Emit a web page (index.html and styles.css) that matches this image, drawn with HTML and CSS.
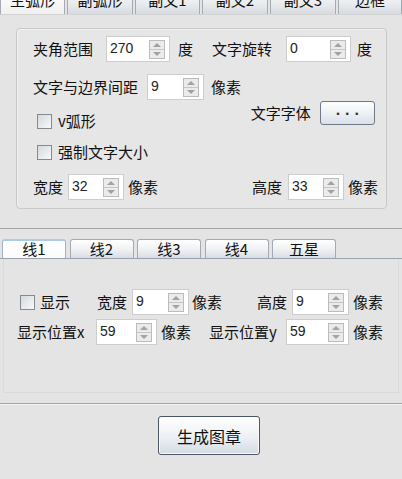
FILE: index.html
```html
<!DOCTYPE html>
<html>
<head>
<meta charset="utf-8">
<link rel="stylesheet" href="styles.css">
</head>
<body>
<div class="win">
  <div class="top-tabs">
    <div class="ttab active w65">主弧形</div>
    <div class="ttab w66">副弧形</div>
    <div class="ttab w65">副文1</div>
    <div class="ttab w66">副文2</div>
    <div class="ttab w66">副文3</div>
    <div class="ttab w64">边框</div>
  </div>

  <div class="top-panel">
    <div class="group">
      <div class="row r1">
        <span class="lbl w62">夹角范围</span>
        <div class="spinbox ml11 sw64"><span class="val">270</span><span class="spin"><i class="up"></i><i class="dn"></i></span></div>
        <span class="lbl ml8 w15">度</span>
        <span class="lbl ml19 w63">文字旋转</span>
        <div class="spinbox ml11 sw65"><span class="val">0</span><span class="spin"><i class="up"></i><i class="dn"></i></span></div>
        <span class="lbl ml6 w15">度</span>
      </div>
      <div class="row r2">
        <span class="lbl w114">文字与边界间距</span>
        <div class="spinbox sw57"><span class="val">9</span><span class="spin"><i class="up"></i><i class="dn"></i></span></div>
        <span class="lbl ml7 w30">像素</span>
      </div>
      <div class="row r3">
        <div class="chk-item low">
          <span class="chk"></span><span class="lbl small-v">v弧形</span>
        </div>
        <span class="lbl font-lbl w63">文字字体</span>
        <button class="dots">· · ·</button>
      </div>
      <div class="row r4">
        <div class="chk-item">
          <span class="chk"></span><span class="lbl">强制文字大小</span>
        </div>
      </div>
      <div class="row r5">
        <span class="lbl w30">宽度</span>
        <div class="spinbox ml5 sw56"><span class="val">32</span><span class="spin"><i class="up"></i><i class="dn"></i></span></div>
        <span class="lbl ml4 w30">像素</span>
        <span class="lbl ml94 w30">高度</span>
        <div class="spinbox ml6 sw56"><span class="val">33</span><span class="spin"><i class="up"></i><i class="dn"></i></span></div>
        <span class="lbl ml4 w30">像素</span>
      </div>
    </div>
  </div>

  <div class="line-tabs">
    <div class="ltab active">线1</div>
    <div class="ltab">线2</div>
    <div class="ltab">线3</div>
    <div class="ltab">线4</div>
    <div class="ltab">五星</div>
  </div>

  <div class="line-panel">
    <div class="row ra">
      <span class="chk ml16"></span>
      <span class="lbl ml5 w30">显示</span>
      <span class="lbl ml27 w30">宽度</span>
      <div class="spinbox ml5 sw57"><span class="val">9</span><span class="spin"><i class="up"></i><i class="dn"></i></span></div>
      <span class="lbl ml3 w30">像素</span>
      <span class="lbl ml35 w30">高度</span>
      <div class="spinbox ml5 sw57"><span class="val">9</span><span class="spin"><i class="up"></i><i class="dn"></i></span></div>
      <span class="lbl ml4 w30">像素</span>
    </div>
    <div class="row rb">
      <span class="lbl ml13 w71">显示位置x</span>
      <div class="spinbox ml8 sw61"><span class="val">59</span><span class="spin"><i class="up"></i><i class="dn"></i></span></div>
      <span class="lbl ml4 w30">像素</span>
      <span class="lbl ml18 w76">显示位置y</span>
      <div class="spinbox ml1 sw63"><span class="val">59</span><span class="spin"><i class="up"></i><i class="dn"></i></span></div>
      <span class="lbl ml4 w30">像素</span>
    </div>
  </div>

  <div class="footer">
    <button class="gen">生成图章</button>
  </div>
</div>
</body>
</html>
```

FILE: styles.css
```css
* { box-sizing: border-box; }
html, body {
  margin: 0;
  padding: 0;
  background: #e4e4e4;
}
body {
  width: 402px;
  height: 479px;
  overflow: hidden;
  font-family: "Noto Sans CJK SC", "DejaVu Sans", sans-serif;
  font-size: 15px;
  color: #111;
}
.win { width: 402px; }

/* top tabs (cut off at top) */
.top-tabs {
  height: 14px;
  overflow: hidden;
  display: flex;
  align-items: flex-end;
  gap: 2px;
}
.ttab {
  flex: none;
  height: 27px;
  line-height: 24px;
  text-align: center;
  border: 1px solid #a3abb5;
  border-bottom: none;
  border-radius: 3px 3px 0 0;
  background: linear-gradient(#fbfbfb, #e9ecef 60%, #d6dbe1);
  font-size: 15px;
}
.ttab.active {
  background: linear-gradient(#ffffff, #f1f1f1);
  border-color: #a8acb0;
}
.w65 { width: 65px; }
.w66 { width: 66px; }
.w64 { width: 64px; }

.top-panel {
  height: 215px;
  border-top: 1px solid #d2d2d2;
  border-bottom: 1px solid #a4a4a4;
  padding-top: 13px;
  padding-left: 16px;
}
.group {
  width: 371px;
  height: 181px;
  border: 1px solid #c8c8c8;
  border-radius: 4px;
  box-shadow: inset 1px 1px 0 #f2f2f2;
  background: #e6e6e6;
  padding: 7px 0 8px 16px;
}

.row {
  display: flex;
  align-items: center;
}
.r1 { height: 26px; }
.r2 { height: 26px; margin-top: 12px; }
.r3 { height: 28px; margin-top: 1px; align-items: flex-start; }
.r4 { height: 20px; margin-top: 13px; }
.r5 { height: 26px; margin-top: 12px; }

.lbl {
  flex: none;
  white-space: nowrap;
  line-height: 20px;
}
.w15 { width: 15px; }
.w30 { width: 30px; }
.w62 { width: 62px; }
.w63 { width: 63px; }
.w71 { width: 71px; }
.w76 { width: 76px; }
.w114 { width: 114px; }

.ml1 { margin-left: 1px; }
.ml3 { margin-left: 3px; }
.ml4 { margin-left: 4px; }
.ml5 { margin-left: 5px; }
.ml6 { margin-left: 6px; }
.ml7 { margin-left: 7px; }
.ml8 { margin-left: 8px; }
.ml11 { margin-left: 11px; }
.ml13 { margin-left: 13px; }
.ml16 { margin-left: 16px; }
.ml18 { margin-left: 18px; }
.ml19 { margin-left: 19px; }
.ml27 { margin-left: 27px; }
.ml35 { margin-left: 35px; }
.ml94 { margin-left: 94px; }

/* spinner */
.spinbox {
  flex: none;
  height: 26px;
  display: flex;
  align-items: center;
  background: #fff;
  border: 1px solid #cdcdcd;
  padding: 0 4px 0 3px;
}
.sw56 { width: 56px; }
.sw57 { width: 57px; }
.sw61 { width: 61px; }
.sw63 { width: 63px; }
.sw64 { width: 64px; }
.sw65 { width: 65px; }
.val {
  flex: 1;
  font-family: "Liberation Sans", Arial, sans-serif;
  font-size: 14px;
  color: #222;
  line-height: 16px;
  padding-bottom: 3px;
}
.spin {
  flex: none;
  width: 16px;
  height: 19px;
  border: 1px solid #bcbcbc;
  background: #ebebeb;
  display: flex;
  flex-direction: column;
}
.spin i {
  flex: 1;
  display: flex;
  align-items: center;
  justify-content: center;
}
.spin i + i { border-top: 1px solid #c6c6c6; }
.spin i.up::before {
  content: "";
  border-left: 4px solid transparent;
  border-right: 4px solid transparent;
  border-bottom: 4px solid #a2a2a2;
}
.spin i.dn::before {
  content: "";
  border-left: 4px solid transparent;
  border-right: 4px solid transparent;
  border-top: 4px solid #a2a2a2;
}

/* checkbox */
.chk {
  flex: none;
  display: inline-block;
  width: 15px;
  height: 15px;
  border: 1px solid #858a90;
  background: linear-gradient(135deg, #d6dade, #f7f8f9);
}
.chk-item {
  display: flex;
  align-items: center;
  margin-left: 4px;
  gap: 6px;
}
.chk-item.low { margin-top: 10px; }
.small-v { font-size: 15px; }
.font-lbl { margin-left: 155px; margin-top: 2px; }

.dots {
  flex: none;
  margin-left: 6px;
  width: 55px;
  height: 24px;
  border: 1px solid #6e7a89;
  border-radius: 3px;
  background: linear-gradient(#fefefe, #eef1f4 50%, #d9e0e8);
  font-family: "DejaVu Sans", sans-serif;
  font-size: 13px;
  font-weight: bold;
  color: #333;
  padding: 0;
}

/* line tabs */
.line-tabs {
  height: 30px;
  padding: 10px 0 0 2px;
  display: flex;
  gap: 3.5px;
  border-bottom: 1px solid #9aa3ad;
}
.ltab {
  flex: none;
  width: 64px;
  height: 19px;
  line-height: 17px;
  text-align: center;
  font-size: 15px;
  border: 1px solid #a2aab4;
  border-bottom: none;
  border-radius: 3px 3px 0 0;
  background: linear-gradient(#ffffff, #eef0f3 55%, #d8dde4);
}
.ltab.active {
  border-color: #9fb3c8;
  border-top: 2px solid #a9cbea;
  background: linear-gradient(#ffffff, #fbfbfb);
  line-height: 16px;
}

.line-panel {
  height: 134px;
  margin: 0 3px 10px 3px;
  border: 1px solid #dadada;
  border-top: none;
  padding-top: 30px;
}
.ra { height: 26px; }
.rb { height: 26px; margin-top: 4px; }

/* footer */
.footer {
  border-top: 1px solid #a4a4a4;
  box-shadow: inset 0 1px 0 #f4f4f4;
  padding: 12px 0 0 158px;
}
.gen {
  width: 102px;
  height: 39px;
  border: 1px solid #4d5666;
  border-radius: 3px;
  background: linear-gradient(#fefefe, #eff2f5 50%, #d3dbe4);
  box-shadow: inset 0 0 0 1px #fafafa;
  font-family: "Noto Sans CJK SC", sans-serif;
  font-size: 16px;
  color: #111;
  padding: 0;
}
```
